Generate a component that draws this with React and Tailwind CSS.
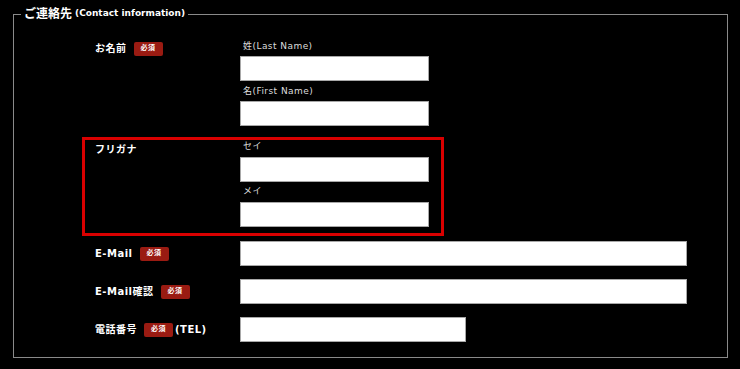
const font = { fontFamily: '"DejaVu Sans", "Noto Sans CJK JP", sans-serif' };

const Badge = () => (
  <span className="inline-flex items-center justify-center w-[29px] h-[14px] rounded-[2px] bg-[#9a1b12] text-white text-[7px] font-bold leading-none">
    必須
  </span>
);

const Label = ({ children, required, suffix }) => (
  <div className="w-[145px] shrink-0 flex items-center gap-[7px] h-[17px] text-white text-[10px] font-bold tracking-[0.05em]">
    <span>{children}</span>
    {required && <Badge />}
    {suffix && <span className="-ml-[5px]">{suffix}</span>}
  </div>
);

const Sub = ({ children, className = "" }) => (
  <div className={`h-[12px] leading-[12px] text-[9px] text-[#dcdcdc] tracking-[0.05em] pl-[3px] ${className}`}>
    {children}
  </div>
);

const Input = ({ w }) => (
  <div className={`${w} h-[25px] bg-white border border-[#a8a8a8]`} />
);

export default function App() {
  return (
    <div className="w-[740px] h-[369px] bg-black overflow-hidden" style={font}>
      <fieldset className="ml-[13px] mt-[7px] w-[715px] border border-[#8a8a8a] pb-[15px]">
        <legend className="ml-[7px] px-[3px] h-[14px] flex items-center text-white font-bold">
          <span className="text-[12px]">ご連絡先</span>
          <span className="text-[9px] ml-[3px]">(Contact information)</span>
        </legend>

        <div className="pl-[68px] pt-[19px]">
          {/* お名前 */}
          <div className="flex pl-[13px]">
            <Label required>お名前</Label>
            <div className="flex flex-col">
              <Sub>姓(Last Name)</Sub>
              <div className="mt-[4px]"><Input w="w-[189px]" /></div>
              <Sub className="mt-[4px]">名(First Name)</Sub>
              <div className="mt-[4px]"><Input w="w-[189px]" /></div>
            </div>
          </div>

          {/* フリガナ */}
          <div className="mt-[11px] w-[362px] flex border-[3px] border-[#d90000] pl-[10px] pr-[12px] pb-[6px]">
            <div className="mt-[1px]">
              <Label>フリガナ</Label>
            </div>
            <div className="flex flex-col">
              <Sub>セイ</Sub>
              <div className="mt-[5px]"><Input w="w-[189px]" /></div>
              <Sub className="mt-[3px]">メイ</Sub>
              <div className="mt-[5px]"><Input w="w-[189px]" /></div>
            </div>
          </div>

          <div className="mt-[5px] flex items-center pl-[13px]">
            <Label required>E-Mail</Label>
            <Input w="w-[447px]" />
          </div>

          <div className="mt-[13px] flex items-center pl-[13px]">
            <Label required>E-Mail確認</Label>
            <Input w="w-[447px]" />
          </div>

          <div className="mt-[13px] flex items-center pl-[13px]">
            <Label required suffix="(TEL)">電話番号</Label>
            <Input w="w-[226px]" />
          </div>
        </div>
      </fieldset>
    </div>
  );
}
